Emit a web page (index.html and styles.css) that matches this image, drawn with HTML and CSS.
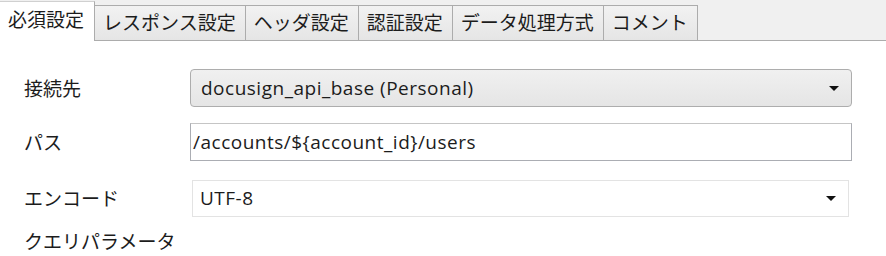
FILE: index.html
```html
<!DOCTYPE html>
<html lang="ja">
<head>
    <meta charset="UTF-8">
    <title>API設定</title>
    <link rel="stylesheet" href="styles.css">
</head>
<body>
    <!-- タブ -->
    <div class="tabs">
        <div class="tab active">必須設定</div>
        <div class="tab">レスポンス設定</div>
        <div class="tab">ヘッダ設定</div>
        <div class="tab">認証設定</div>
        <div class="tab">データ処理方式</div>
        <div class="tab">コメント</div>
    </div>

    <!-- 必須設定フォーム -->
    <div class="form">
        <div class="row">
            <div class="label">接続先</div>
            <div class="select">
                <span class="value">docusign_api_base (Personal)</span>
                <span class="arrow"></span>
            </div>
        </div>
        <div class="row">
            <div class="label">パス</div>
            <div class="input">/accounts/${account_id}/users</div>
        </div>
        <div class="row">
            <div class="label">エンコード</div>
            <div class="select flat">
                <span class="value">UTF-8</span>
                <span class="arrow"></span>
            </div>
        </div>
        <div class="row last">
            <div class="label">クエリパラメータ</div>
        </div>
    </div>
</body>
</html>
```

FILE: styles.css
```css
/* 全体 */
body {
    margin: 0;
    background: #fff;
    font-family: "Open Sans", "Noto Sans CJK JP", sans-serif;
    font-size: 19px;
    color: #1c1c1c;
    overflow: hidden;
}

/* タブ */
.tabs {
    display: flex;
    align-items: flex-end;
    height: 40px;
    background: #f0f0f0;
    border-bottom: 1px solid #acacac;
}
.tab {
    height: 34px;
    line-height: 34px;
    padding: 0 9px 0 8px;
    background: linear-gradient(#f2f2f2, #e5e5e5);
    border: 1px solid #acacac;
    border-bottom: none;
    border-left: none;
    white-space: nowrap;
}
.tab.active {
    height: 39px;
    line-height: 37px;
    padding: 0 10px 0 8px;
    background: #fff;
    border-color: #d0d0d0;
    border-right-color: #acacac;
    margin-bottom: -1px;
}

/* フォーム */
.form {
    padding: 28px 34px 0 24px;
}
.row {
    display: flex;
    align-items: center;
    min-height: 38px;
    margin-bottom: 16px;
}
.row:nth-child(3) {
    margin-top: 18px;
    margin-bottom: 6px;
}
.row.last {
    min-height: 36px;
    margin-bottom: 0;
}
.label {
    width: 166px;
    flex-shrink: 0;
}
.select, .input {
    flex: 1;
    height: 38px;
    box-sizing: border-box;
    display: flex;
    align-items: center;
    letter-spacing: 0.5px;
}
.select {
    padding: 0 12px 0 10px;
    border: 1px solid #adadad;
    border-radius: 4px;
    background: linear-gradient(#f0f0f0, #e5e5e5);
}
.select .value {
    flex: 1;
}
.select.flat {
    margin: 0 3px 0 2px;
    height: 37px;
    border-color: #e3e3e3;
    border-radius: 0;
    background: #fff;
    padding-left: 7px;
}
.arrow {
    width: 0;
    height: 0;
    border-left: 5px solid transparent;
    border-right: 5px solid transparent;
    border-top: 5px solid #111;
}
.input {
    padding: 0 2px;
    border: 1px solid #abadb3;
    border-top-color: #c5c5c5;
    background: #fff;
}
```
